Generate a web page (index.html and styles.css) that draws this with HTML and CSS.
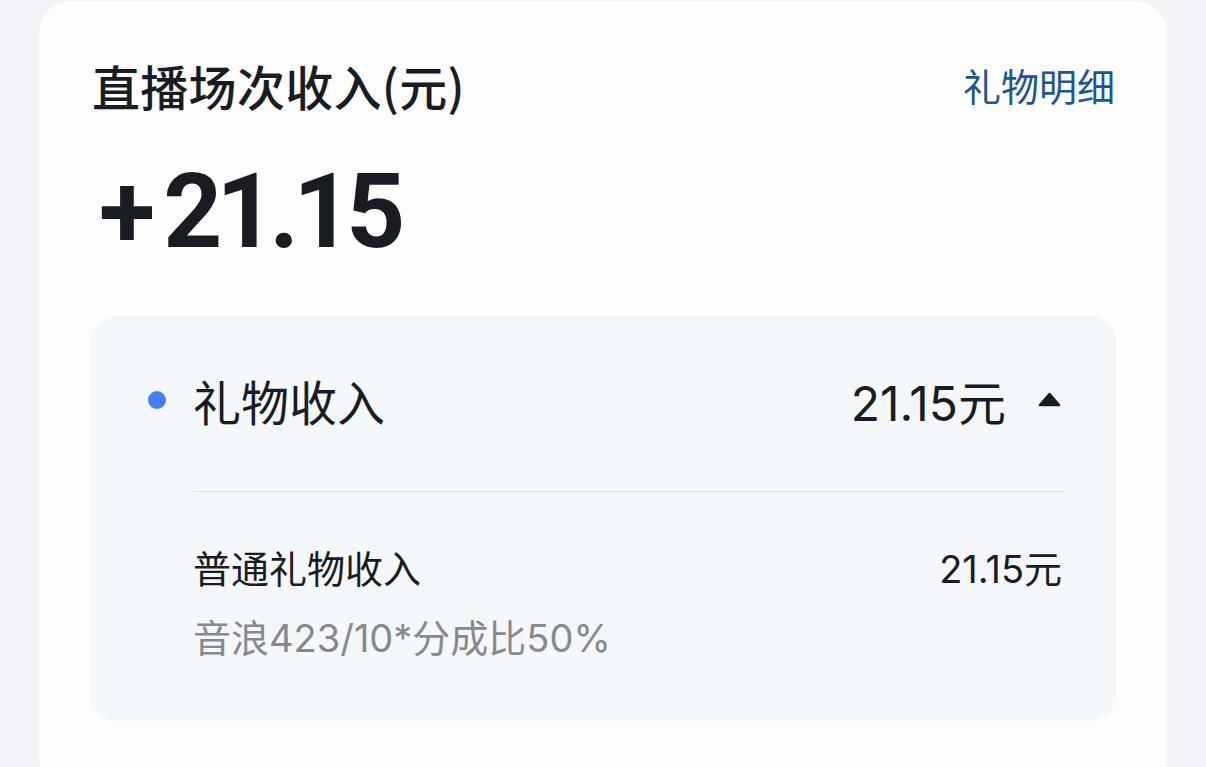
FILE: index.html
```html
<!DOCTYPE html>
<html lang="zh-CN">
<head>
<meta charset="utf-8">
<title>直播场次收入</title>
<link rel="stylesheet" href="styles.css">
</head>
<body>
<div class="card">
  <div class="head">
    <div class="title">直播场次收入(元)</div>
    <div class="link">礼物明细</div>
  </div>
  <div class="amount"><span class="plus">+</span>21.15</div>
  <div class="panel">
    <div class="row-main">
      <span class="dot"></span>
      <span class="main-label">礼物收入</span>
      <span class="main-value">21.15元</span>
      <svg class="caret" width="23" height="15" viewBox="0 0 23 15"><path d="M11.5 2 L21 13 H2 Z" fill="#1a1c23" stroke="#1a1c23" stroke-width="2.5" stroke-linejoin="round"/></svg>
    </div>
    <div class="detail">
      <div class="divider"></div>
      <div class="sub-row">
        <span class="sub-label">普通礼物收入</span>
        <span class="sub-value">21.15元</span>
      </div>
      <div class="note">音浪423/10*分成比50%</div>
    </div>
  </div>
</div>
</body>
</html>
```

FILE: styles.css
```css
html, body {
  margin: 0;
  padding: 0;
  background: #f2f3f7;
  font-family: "Inter", "Noto Sans CJK SC", sans-serif;
  color: #1a1c23;
}
.card {
  margin: 1px 0 0 39px;
  width: 1128px;
  height: 790px;
  box-sizing: border-box;
  background: #fdfdfe;
  border-radius: 32px;
  padding: 54px 51px 0 51px;
}
.head {
  display: flex;
  justify-content: space-between;
  align-items: center;
  height: 60px;
}
.title {
  font-family: "Noto Sans CJK SC", sans-serif;
  font-weight: 500;
  font-size: 48px;
  line-height: 60px;
  padding-left: 2px;
  letter-spacing: 0.3px;
}
.link {
  font-family: "Noto Sans CJK SC", sans-serif;
  font-size: 38px;
  line-height: 60px;
  color: #1c5592;
  margin-right: 1px;
}
.amount {
  margin-top: 38px;
  font-family: "Roboto", "Inter", sans-serif;
  font-weight: 700;
  font-size: 103px;
  line-height: 118px;
  letter-spacing: -6px;
  padding-left: 9px;
}
.plus {
  letter-spacing: 0;
  margin-right: 8px;
}
.panel {
  margin-top: 45px;
  background: #f5f8fa;
  border-radius: 26px;
  padding: 0 52px 57px 58px;
}
.row-main {
  display: flex;
  align-items: center;
  height: 175px;
  box-sizing: border-box;
  padding-bottom: 8px;
}
.dot {
  width: 18px;
  height: 18px;
  border-radius: 50%;
  background: #467df2;
  margin-right: 27px;
}
.main-label {
  font-family: "Noto Sans CJK SC", sans-serif;
  font-size: 48px;
  flex: 1;
}
.main-value {
  font-size: 48px;
  font-family: "Inter", "Noto Sans CJK SC", sans-serif;
}
.caret {
  margin-left: 32px;
  margin-right: 3px;
}
.detail {
  margin-left: 45px;
}
.divider {
  height: 1px;
  background: #e1e4e8;
}
.sub-row {
  display: flex;
  justify-content: space-between;
  align-items: center;
  margin-top: 48px;
  height: 52px;
  font-size: 38px;
}
.sub-label {
  font-family: "Noto Sans CJK SC", sans-serif;
}
.sub-value {
  font-family: "Inter", "Noto Sans CJK SC", sans-serif;
  margin-right: 2px;
}
.note {
  margin-top: 20px;
  font-size: 38px;
  line-height: 52px;
  color: #86898f;
  font-family: "Inter", "Noto Sans CJK SC", sans-serif;
}
```
